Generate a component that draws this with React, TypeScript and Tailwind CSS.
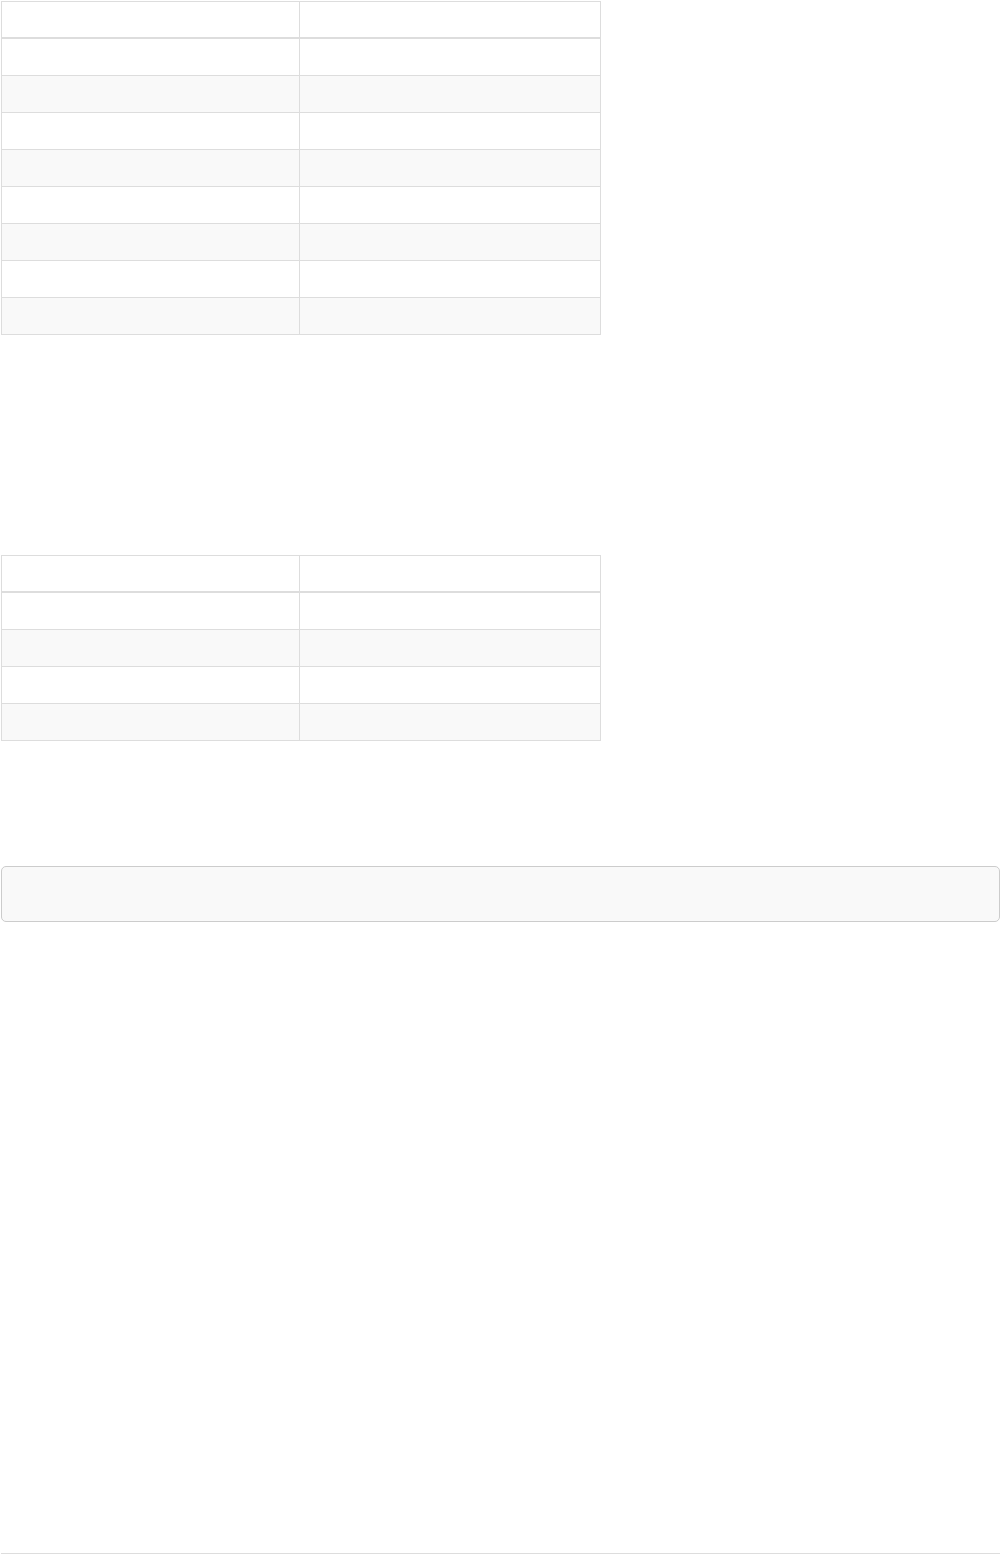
import React from "react";

function Table({ rows }: { rows: number }) {
  return (
    <div className="w-[600px] border-t border-l border-r border-[#dddddd]">
      <div className="flex border-b-2 border-[#dddddd]">
        <div className="w-[298px] h-[35px] border-r border-[#dddddd]" />
        <div className="flex-1 h-[35px]" />
      </div>
      {Array.from({ length: rows }).map((_, i) => (
        <div
          key={i}
          className={
            i % 2 === 1
              ? "flex border-b border-[#dddddd] bg-[#f9f9f9]"
              : "flex border-b border-[#dddddd] bg-white"
          }
        >
          <div className="w-[298px] h-[36px] border-r border-[#dddddd]" />
          <div className="flex-1 h-[36px]" />
        </div>
      ))}
    </div>
  );
}

export default function App() {
  return (
    <div
      className="w-[1000px] h-[1554px] bg-white pl-[1px] pt-[1px] flex flex-col"
      style={{ fontFamily: '"Liberation Sans", Arial, sans-serif' }}
    >
      <Table rows={8} />
      <div className="mt-[220px]">
        <Table rows={4} />
      </div>
      <div className="mt-[125px] w-[999px] h-[56px] rounded-[5px] border border-[#cccccc] bg-[#f9f9f9]" />
      <div className="mt-[631px] w-[999px] h-[1px] bg-[#dddddd]" />
    </div>
  );
}
